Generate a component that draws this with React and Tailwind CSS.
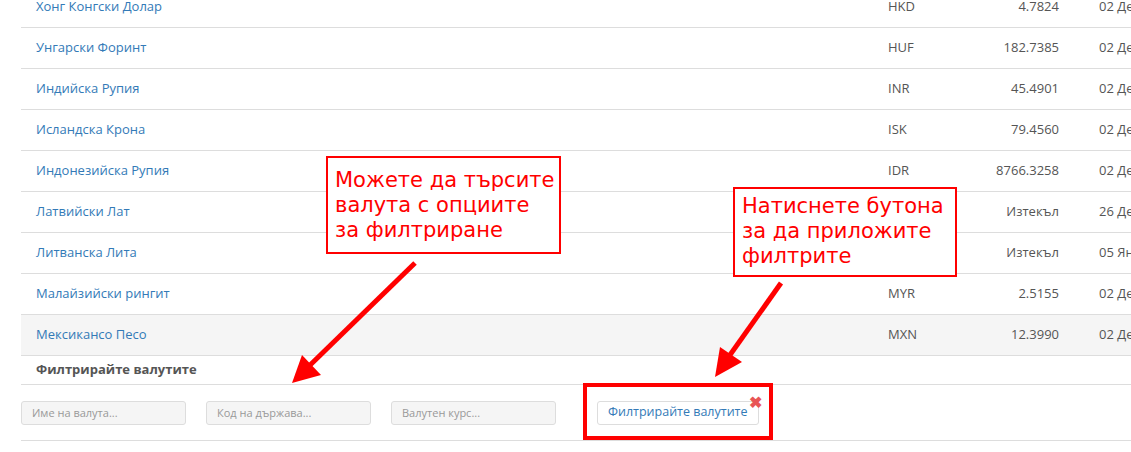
import React from 'react'

const rows = [
  { name: 'Хонг Конгски Долар', code: 'HKD', rate: '4.7824', date: '02 Декември' },
  { name: 'Унгарски Форинт', code: 'HUF', rate: '182.7385', date: '02 Декември' },
  { name: 'Индийска Рупия', code: 'INR', rate: '45.4901', date: '02 Декември' },
  { name: 'Исландска Крона', code: 'ISK', rate: '79.4560', date: '02 Декември' },
  { name: 'Индонезийска Рупия', code: 'IDR', rate: '8766.3258', date: '02 Декември' },
  { name: 'Латвийски Лат', code: 'LVL', rate: 'Изтекъл', date: '26 Декември' },
  { name: 'Литванска Лита', code: 'LTL', rate: 'Изтекъл', date: '05 Януари' },
  { name: 'Малайзийски рингит', code: 'MYR', rate: '2.5155', date: '02 Декември' },
  { name: 'Мексикансо Песо', code: 'MXN', rate: '12.3990', date: '02 Декември', hover: true },
]

// red callout box used for the screenshot annotations
const Callout = ({ className, lines }) => (
  <div
    className={`absolute border-2 border-[#f00] bg-white text-[#f00] text-[21px] leading-[25px] whitespace-nowrap ${className}`}
    style={{ fontFamily: '"DejaVu Sans", sans-serif' }}
  >
    {lines.map((l) => (
      <div key={l}>{l}</div>
    ))}
  </div>
)

export default function App() {
  return (
    <div
      className="relative w-[1131px] h-[452px] overflow-hidden bg-white"
      style={{ fontFamily: '"Open Sans", sans-serif' }}
    >
      <div className="ml-[21px] w-[1180px] -mt-[13px] text-[13px]">
        {rows.map((r) => (
          <div
            key={r.code}
            className={`flex items-center h-[41px] border-b border-[#ddd] ${r.hover ? 'bg-[#f5f5f5]' : ''}`}
          >
            <div className="w-[852px] shrink-0 pl-[15px] text-[#337ab7]">{r.name}</div>
            <div className="w-[100px] shrink-0 pl-[15px] text-[#555]">{r.code}</div>
            <div className="w-[101px] shrink-0 pr-[15px] text-right text-[#555]">{r.rate}</div>
            <div className="shrink-0 pl-[25px] text-[#555] whitespace-nowrap">{r.date}</div>
          </div>
        ))}
        <div className="flex items-center h-[29px] border-b border-[#ddd] pl-[15px] font-bold text-[#555]">
          Филтрирайте валутите
        </div>
        <div className="flex items-center h-[56px] border-b border-[#ddd] gap-[20px]">
          {['Име на валута...', 'Код на държава...', 'Валутен курс...'].map((p) => (
            <input
              key={p}
              placeholder={p}
              className="w-[165px] h-[24px] px-[10px] bg-[#f5f5f5] border border-[#ddd] rounded-[3px] text-[11px] placeholder:text-[#999] outline-none"
            />
          ))}
          <div className="ml-[21px] relative">
            <button className="h-[24px] px-[10px] bg-white border border-[#ddd] rounded-[3px] text-[12.5px] text-[#337ab7] whitespace-nowrap">
              Филтрирайте валутите
            </button>
            <span className="absolute -right-[3px] -top-[7px] text-[#e85555] text-[16px] font-bold leading-none">
              ✖
            </span>
          </div>
        </div>
      </div>

      {/* annotations */}
      <Callout
        className="left-[326px] top-[156px] w-[235px] h-[98px] pl-[7px] pt-[10px]"
        lines={['Можете да търсите', 'валута с опциите', 'за филтриране']}
      />
      <Callout
        className="left-[733px] top-[187px] w-[224px] h-[90px] pl-[7px] pt-[5px]"
        lines={['Натиснете бутона', 'за да приложите', 'филтрите']}
      />
      <div className="absolute left-[583px] top-[383px] w-[190px] h-[57px] border-[4px] border-[#f00]" />
      <svg className="absolute left-0 top-0" width="1131" height="452">
        <line x1="415" y1="263" x2="305" y2="370" stroke="#f00" strokeWidth="5" />
        <polygon points="292,383 302,355 321,375" fill="#f00" />
        <line x1="781" y1="283" x2="725" y2="362" stroke="#f00" strokeWidth="5" />
        <polygon points="715,377 720,347 742,362" fill="#f00" />
      </svg>
    </div>
  )
}
